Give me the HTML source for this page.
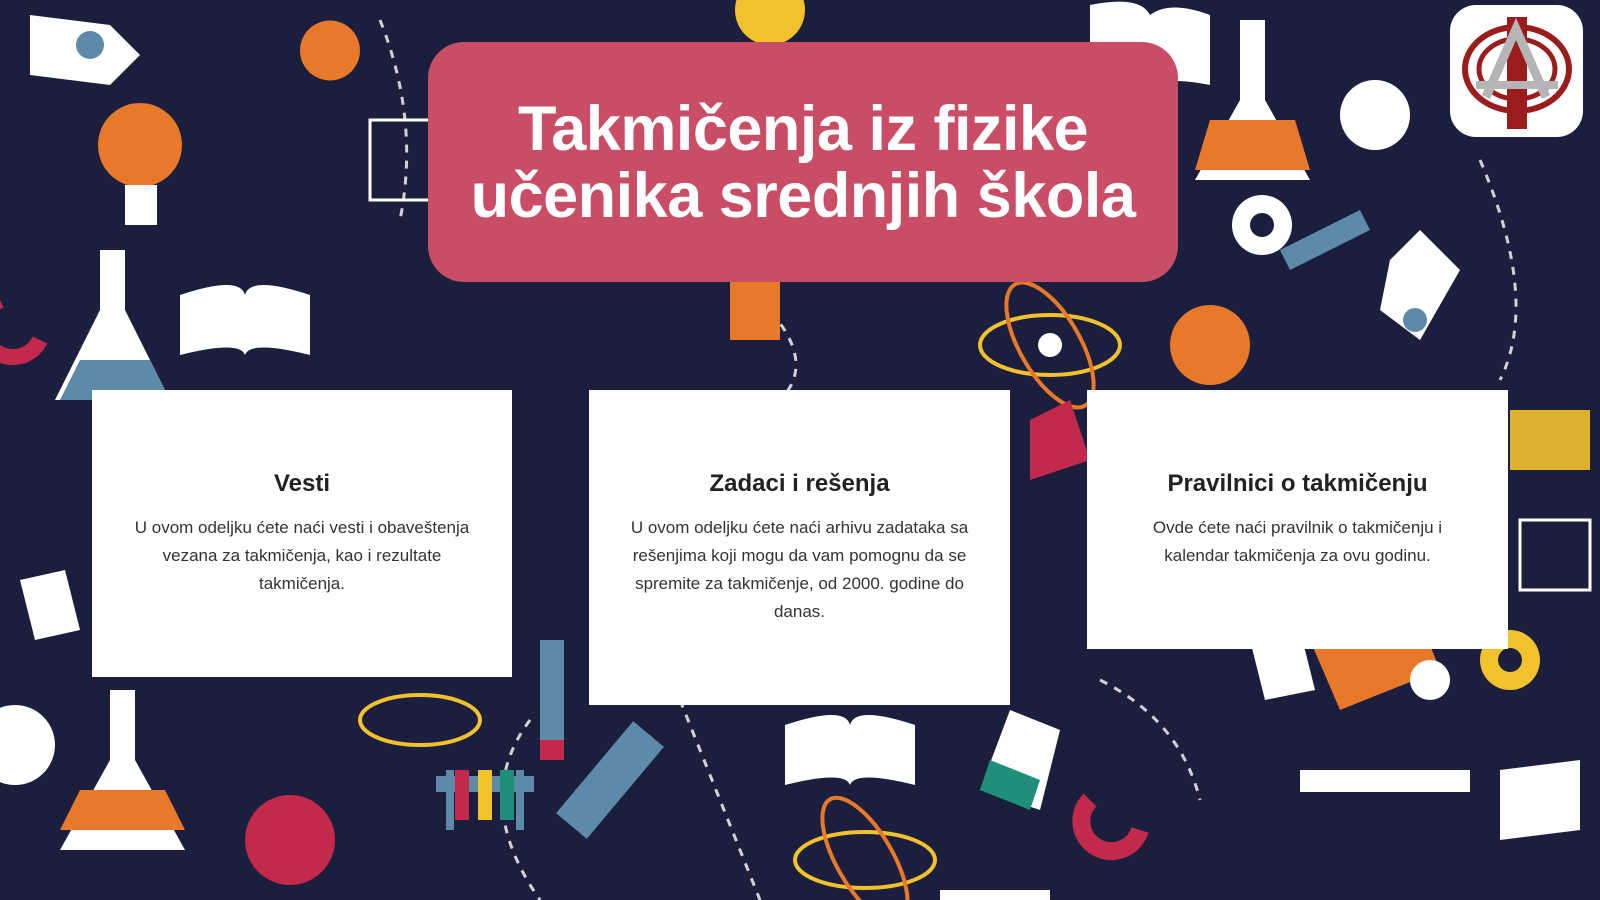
<!DOCTYPE html>
<html><head><meta charset="utf-8"><style>
html,body{margin:0;padding:0}
body{width:1600px;height:900px;overflow:hidden;background:#1b1f3d;position:relative;font-family:"Liberation Sans","DejaVu Sans",sans-serif}
svg.bg{position:absolute;left:0;top:0}
.banner{position:absolute;left:428px;top:42px;width:750px;height:240px;background:#c94d65;border-radius:36px;color:#fff;text-align:center;font-weight:bold;font-size:63px;line-height:67px;box-sizing:border-box;padding-top:54px;letter-spacing:-0.5px}
.card{position:absolute;background:#fff;text-align:center;color:#222;box-sizing:border-box}
.card h2{margin:0;font-size:24px;font-weight:bold;position:absolute;left:0;right:0;top:470px}
.card p{margin:0;font-size:17px;line-height:28px;position:absolute;left:36px;right:36px;color:#333}
.logo{position:absolute;left:1450px;top:5px;width:133px;height:132px;background:#fff;border-radius:26px}
</style></head><body>
<svg class="bg" width="1600" height="900" viewBox="0 0 1600 900">
<g fill="none" stroke="#fff" stroke-width="3" stroke-dasharray="8 8" opacity=".8">
<path d="M380 20 Q420 120 400 220"/><path d="M530 720 Q470 800 540 900"/><path d="M680 700 Q720 800 760 900"/><path d="M1100 680 Q1180 720 1200 800"/><path d="M1480 160 Q1540 300 1500 380"/><path d="M760 300 Q820 360 780 400"/>
</g>
<circle cx="140" cy="145" r="42" fill="#e8792b"/><rect x="125" y="185" width="32" height="40" fill="#fff"/>
<circle cx="290" cy="840" r="45" fill="#c2294a"/><circle cx="1210" cy="345" r="40" fill="#e8792b"/>
<circle cx="770" cy="10" r="35" fill="#f2c12e"/>
<path d="M100 250 h25 v60 l45 90 h-115 l45 -90z" fill="#fff"/><path d="M80 360 h70 l20 40 h-110z" fill="#5d8aa8"/>
<path d="M110 690 h25 v70 l50 90 h-125 l50 -90z" fill="#fff"/><path d="M80 790 h85 l20 40 h-125z" fill="#e8792b"/>
<path d="M1240 20 h25 v80 l45 80 h-115 l45 -80z" fill="#fff"/><path d="M1210 120 h85 l15 50 h-115z" fill="#e8792b"/>
<path d="M1010 710 l50 20 l-20 80 l-60 -20z" fill="#fff"/><path d="M990 760 l50 20 l-10 30 l-50 -20z" fill="#1f8f7a"/>
<path d="M180 295 q60 -20 65 0 q5 -20 65 0 v60 q-60 -15 -65 0 q-5 -15 -65 0z" fill="#fff"/>
<path d="M785 725 q60 -20 65 0 q5 -20 65 0 v60 q-60 -15 -65 0 q-5 -15 -65 0z" fill="#fff"/>
<path d="M1090 5 q50 -10 60 10 q20 -15 60 0 v70 q-50 -10 -60 5 q-10 -15 -60 -5z" fill="#fff"/>
<path d="M1500 770 l80 -10 v70 l-80 10z" fill="#fff"/>
<g fill="none" stroke="#f2c12e" stroke-width="4"><ellipse cx="1050" cy="345" rx="70" ry="30"/><ellipse cx="420" cy="720" rx="60" ry="25"/><ellipse cx="865" cy="860" rx="70" ry="28"/></g>
<g fill="none" stroke="#e8792b" stroke-width="4"><ellipse cx="1050" cy="345" rx="70" ry="30" transform="rotate(60 1050 345)"/><ellipse cx="865" cy="860" rx="70" ry="28" transform="rotate(60 865 860)"/></g>
<circle cx="1050" cy="345" r="12" fill="#fff"/>
<rect x="590" y="720" width="40" height="120" fill="#5d8aa8" transform="rotate(40 610 780)"/>
<rect x="540" y="640" width="24" height="110" fill="#5d8aa8"/><rect x="540" y="740" width="24" height="20" fill="#c2294a"/>
<path d="M30 15 l80 10 l30 30 l-30 30 l-80 -10z" fill="#fff"/><circle cx="90" cy="45" r="14" fill="#5d8aa8"/>
<path d="M1390 260 l30 -30 l40 40 l-40 70 l-40 -30z" fill="#fff"/><circle cx="1415" cy="320" r="12" fill="#5d8aa8"/>
<circle cx="15" cy="745" r="40" fill="#fff"/><circle cx="1375" cy="115" r="35" fill="#fff"/>
<circle cx="1262" cy="225" r="30" fill="#fff"/><circle cx="1262" cy="225" r="12" fill="#1b1f3d"/>
<circle cx="1510" cy="660" r="30" fill="#f2c12e"/><circle cx="1510" cy="660" r="12" fill="#1b1f3d"/>
<path d="M1310 640 l110 -20 l20 50 l-100 40z" fill="#e8792b"/><circle cx="1430" cy="680" r="20" fill="#fff"/>
<rect x="1300" y="770" width="170" height="22" fill="#fff"/>
<path d="M300 50 a30 30 0 1 1 0 1z" fill="#e8792b"/>
<path d="M1280 250 l80 -40 l10 20 l-80 40z" fill="#5d8aa8"/>
<path d="M1090 800 a30 30 0 1 0 50 30" fill="none" stroke="#c2294a" stroke-width="18"/>
<path d="M0 300 a30 30 0 1 0 40 40" fill="none" stroke="#c2294a" stroke-width="16"/>
<path d="M730 280 h50 v60 h-50z" fill="#e8792b"/>
<path d="M940 890 h110 v10 h-110z" fill="#fff"/>
<path d="M1030 420 l40 -20 l20 60 l-60 20z" fill="#c2294a"/>
<path d="M440 780 h90 v8 h-90z M450 770 v60 M520 770 v60" stroke="#5d8aa8" stroke-width="8"/>
<rect x="455" y="770" width="14" height="50" fill="#c2294a"/><rect x="478" y="770" width="14" height="50" fill="#f2c12e"/><rect x="500" y="770" width="14" height="50" fill="#1f8f7a"/>
<path d="M1510 410 h80 v60 h-80z" fill="#f2c12e" opacity=".9"/>
<path d="M20 580 l45 -10 l15 60 l-45 10z" fill="#fff"/>
<path d="M1250 640 l50 -10 l15 60 l-50 10z" fill="#fff"/>
<path d="M370 120 h60 v80 h-60z" fill="none" stroke="#fff" stroke-width="3"/>
<path d="M1520 520 h70 v70 h-70z" fill="none" stroke="#fff" stroke-width="3"/>
</svg>
<div class="banner">Takmičenja iz fizike<br>učenika srednjih škola</div>
<div class="logo"><svg width="133" height="132" viewBox="0 0 133 132">
<rect x="57" y="12" width="20" height="112" fill="#9b1c1c"/>
<ellipse cx="67" cy="64" rx="52" ry="42" fill="none" stroke="#9b1c1c" stroke-width="6"/>
<ellipse cx="67" cy="64" rx="38" ry="30" fill="none" stroke="#9b1c1c" stroke-width="5"/>
<path d="M36 92 L66 24 L96 92" fill="none" stroke="#b5b5b5" stroke-width="9"/>
<rect x="26" y="76" width="82" height="8" fill="#b5b5b5"/>
</svg></div>
<div class="card" style="left:92px;top:390px;width:420px;height:287px">
<h2 style="top:80px">Vesti</h2>
<p style="top:124px">U ovom odeljku ćete naći vesti i obaveštenja vezana za takmičenja, kao i rezultate takmičenja.</p></div>
<div class="card" style="left:589px;top:390px;width:421px;height:315px">
<h2 style="top:80px">Zadaci i rešenja</h2>
<p style="top:124px">U ovom odeljku ćete naći arhivu zadataka sa rešenjima koji mogu da vam pomognu da se spremite za takmičenje, od 2000. godine do danas.</p></div>
<div class="card" style="left:1087px;top:390px;width:421px;height:259px">
<h2 style="top:80px">Pravilnici o takmičenju</h2>
<p style="top:124px">Ovde ćete naći pravilnik o takmičenju i kalendar takmičenja za ovu godinu.</p></div>
</body></html>
